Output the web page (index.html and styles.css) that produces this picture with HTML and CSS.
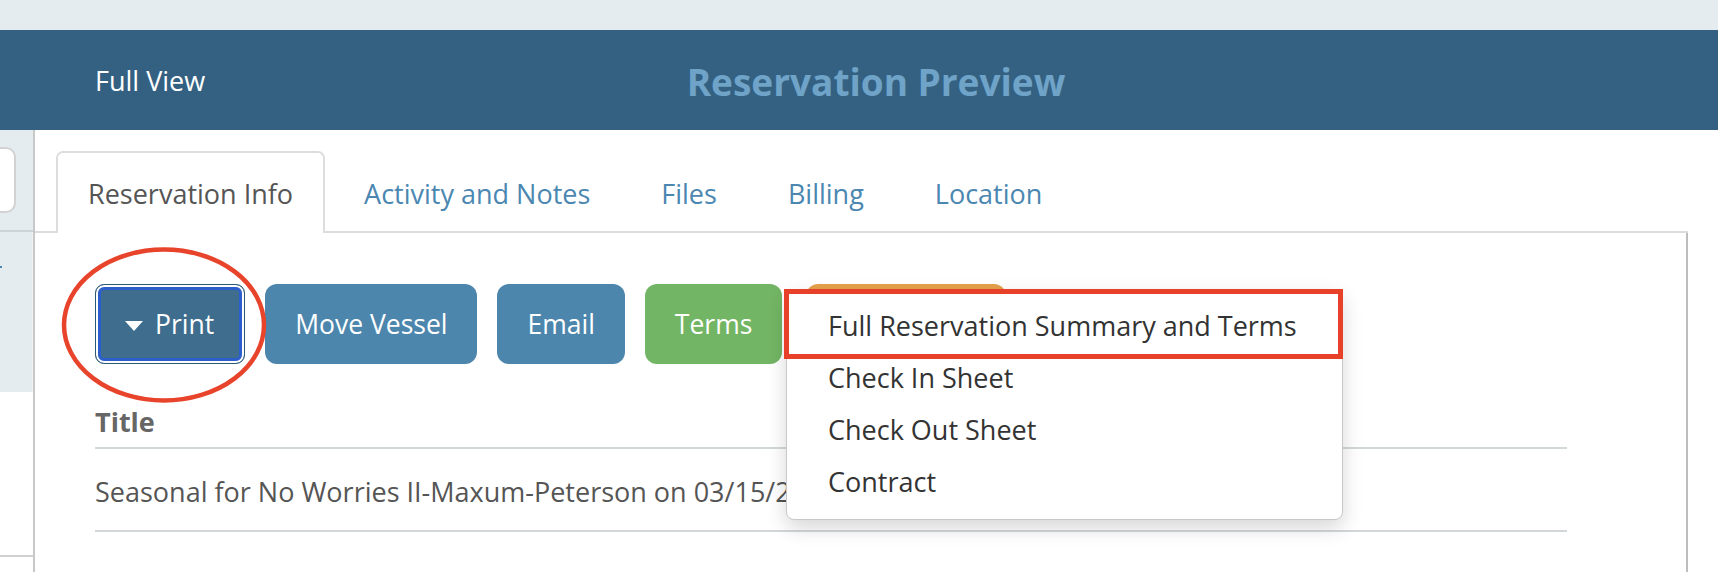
FILE: index.html
```html
<!DOCTYPE html>
<html lang="en">
<head>
<meta charset="utf-8">
<title>Reservation Preview</title>
<link rel="stylesheet" href="styles.css">
</head>
<body>
<div class="page">
  <div class="topbar"></div>
  <header class="header">
    <div class="header-left"><span class="full-view">Full View</span></div>
    <h1 class="header-title">Reservation Preview</h1>
    <div class="header-right"></div>
  </header>
  <div class="main">
    <aside class="sidebar">
      <div class="side-search"><div class="side-input"></div></div>
      <div class="side-list"><span class="side-dot"></span></div>
      <div class="side-empty"></div>
    </aside>
    <section class="panel">
      <ul class="tabs">
        <li class="tab active">Reservation Info</li>
        <li class="tab">Activity and Notes</li>
        <li class="tab">Files</li>
        <li class="tab">Billing</li>
        <li class="tab">Location</li>
      </ul>
      <div class="tab-content">
        <div class="actions">
          <button class="btn btn-print"><span class="caret"></span>Print</button>
          <button class="btn btn-blue">Move Vessel</button>
          <button class="btn btn-blue">Email</button>
          <button class="btn btn-green">Terms</button>
          <button class="btn btn-orange" aria-label="More"></button>
        </div>
        <table class="grid">
          <thead><tr><th>Title</th></tr></thead>
          <tbody><tr><td>Seasonal for No Worries II-Maxum-Peterson on 03/15/2024</td></tr></tbody>
        </table>
      </div>
    </section>
  </div>

  <svg class="mark-ellipse" width="212" height="164" viewBox="0 0 212 164" aria-hidden="true">
    <ellipse cx="104" cy="80" rx="100" ry="75.5" fill="none" stroke="#e8432b" stroke-width="4.5"/>
  </svg>

  <ul class="dropdown">
    <li>Full Reservation Summary and Terms</li>
    <li>Check In Sheet</li>
    <li>Check Out Sheet</li>
    <li>Contract</li>
  </ul>
  <div class="mark-box"></div>
</div>
</body>
</html>
```
FILE: styles.css
```css
* { box-sizing: border-box; }
html, body { margin: 0; padding: 0; }
body {
  font-family: "Open Sans", "DejaVu Sans", sans-serif;
  background: #ffffff;
  width: 1718px;
  height: 572px;
  overflow: hidden;
}
.page { position: relative; width: 1718px; height: 572px; overflow: hidden; }

.topbar { height: 30px; background: #e4ecf0; }

.header {
  height: 100px;
  background: #346182;
  display: grid;
  grid-template-columns: 34px 1fr auto 1fr;
  align-items: center;
}
.header-left { grid-column: 2; padding-left: 61px; }
.full-view { color: #ffffff; font-size: 27px; }
.header-title {
  grid-column: 3;
  margin: 0;
  font-size: 37px;
  font-weight: 700;
  color: #6fa3c8;
  padding-top: 3px;
}
.header-right { grid-column: 4; }

.main { display: flex; height: 442px; }

.sidebar {
  width: 35px;
  flex: none;
  border-right: 2px solid #c8c8c8;
  display: flex;
  flex-direction: column;
}
.side-search {
  height: 102px;
  background: #e4ecf0;
  border-bottom: 2px solid #cdd3d6;
  padding-top: 17px;
  overflow: hidden;
}
.side-input {
  width: 36px;
  height: 66px;
  margin-left: -20px;
  background: #ffffff;
  border: 2px solid #d2d2d2;
  border-radius: 10px;
}
.side-list {
  height: 160px;
  background: #e4ecf0;
  border-right: 1px solid #eef2f4;
  position: relative;
}
.side-dot {
  position: absolute;
  left: 0;
  top: 34px;
  width: 2px;
  height: 2px;
  background: #4a86b0;
}
.side-empty {
  height: 165px;
  border-bottom: 2px solid #d0d0d0;
}

.panel {
  flex: 1;
  padding-top: 21px;
  margin-right: 30px;
  display: flex;
  flex-direction: column;
}

.tabs {
  list-style: none;
  margin: 0;
  padding: 0 0 0 21px;
  display: flex;
  gap: 7px;
  height: 82px;
  border-bottom: 2px solid #dcdcdc;
}
.tab {
  height: 82px;
  margin-bottom: -2px;
  padding: 1px 30px 0;
  border: 2px solid transparent;
  border-bottom: 0;
  border-radius: 7px 7px 0 0;
  display: flex;
  align-items: center;
  font-size: 27px;
  color: #4b87b1;
  white-space: nowrap;
}
.tab.active {
  color: #555555;
  background: #ffffff;
  border-color: #dddddd;
}

.tab-content {
  flex: 1;
  border-right: 2px solid #bdbdbd;
  padding: 51px 119px 0 60px;
}

.actions { display: flex; gap: 20px; height: 80px; }
.btn {
  height: 80px;
  padding: 0 30px;
  border: 0;
  border-radius: 12px;
  font-family: inherit;
  font-size: 26.5px;
  color: #ffffff;
  display: inline-flex;
  align-items: center;
  white-space: nowrap;
}
.btn-blue { background: #4d86ad; }
.btn-green { background: #72b564; }
.btn-orange { background: #e6a24c; margin-left: 4px; width: 200px; }
.btn-print {
  background: #3e6d8e;
  border: 1px solid #2c5878;
  border-radius: 9px;
  box-shadow: inset 0 0 0 2px #ffffff, inset 0 0 0 5px #2c5fcc;
  padding: 0 30px 0 29px;
}
.caret {
  width: 0;
  height: 0;
  border-left: 9px solid transparent;
  border-right: 9px solid transparent;
  border-top: 10px solid #ffffff;
  margin: 4px 12px 0 0;
}

.grid { width: 100%; border-collapse: collapse; margin-top: 39px; }
.grid th {
  text-align: left;
  font-size: 27px;
  font-weight: 700;
  color: #666666;
  padding: 0 0 7px;
  border-bottom: 2px solid #d2d7da;
  line-height: 37px;
}
.grid td {
  font-size: 27px;
  color: #555555;
  padding: 24px 0 20px;
  border-bottom: 2px solid #d2d7da;
  line-height: 37px;
  white-space: nowrap;
}

.mark-ellipse { position: absolute; left: 60px; top: 245px; }

.dropdown {
  position: absolute;
  left: 786px;
  top: 289px;
  width: 557px;
  height: 231px;
  margin: 0;
  padding: 10px 0;
  list-style: none;
  background: #ffffff;
  border: 1px solid #c8c8c8;
  border-radius: 8px;
  box-shadow: 0 8px 20px rgba(0, 0, 0, 0.16);
}
.dropdown li {
  height: 52px;
  line-height: 52px;
  padding-left: 41px;
  font-size: 27px;
  color: #333333;
  white-space: nowrap;
}

.mark-box {
  position: absolute;
  left: 784px;
  top: 289px;
  width: 559px;
  height: 70px;
  border: 5px solid #e8412a;
}
```
